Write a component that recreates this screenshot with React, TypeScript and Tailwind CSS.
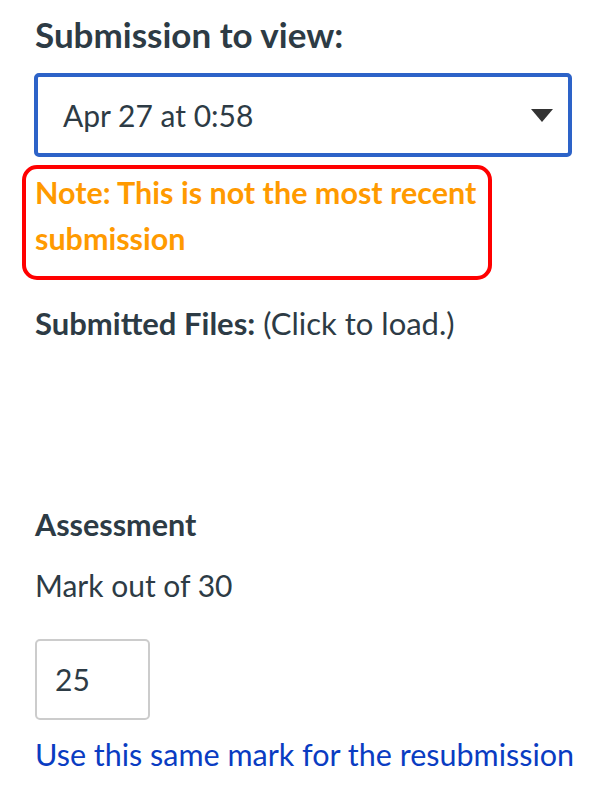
export default function App() {
  return (
    <div className="w-[611px] h-[811px] bg-white text-[#2d3b45]" style={{ fontFamily: "Lato, 'Open Sans', sans-serif" }}>
      <div className="pl-[35px] pt-[14px]">
        <h2 className="text-[35px] font-bold leading-[41px] text-[#2d3b45]">Submission to view:</h2>
        <div className="mt-[18px] ml-[-1px] w-[538px] h-[84px] border-[4px] border-[#2d63c8] rounded-[5px] flex items-center justify-between pl-[25px] pr-[15px]">
          <span className="text-[30px] leading-[36px] text-[#2d3b45]">Apr 27 at 0:58</span>
          <svg width="22" height="13" viewBox="0 0 22 13"><path d="M0 0H22L11 13Z" fill="#333" /></svg>
        </div>
        <div className="mt-[8px] ml-[-13px] w-[470px] h-[115px] border-[4px] border-[#ff0000] rounded-[15px] pl-[9px]">
          <p className="text-[30.5px] font-bold leading-[46px] text-[#ff9a00] whitespace-nowrap">Note: This is not the most recent<br />submission</p>
        </div>
        <p className="mt-[25px] text-[31px] leading-[36px]"><span className="font-bold">Submitted Files:</span> (Click to load.)</p>
        <p className="mt-[166px] text-[30.5px] leading-[34px] font-bold">Assessment</p>
        <p className="mt-[26px] text-[30px] leading-[36px]">Mark out of 30</p>
        <div className="mt-[36px] w-[115px] h-[81px] border-2 border-[#cccccc] rounded-[5px] flex items-center pl-[18px]">
          <span className="text-[30px]">25</span>
        </div>
        <p className="mt-[16px] text-[30.5px] leading-[36px] text-[#0a3cc2] whitespace-nowrap">Use this same mark for the resubmission</p>
      </div>
    </div>
  );
}
